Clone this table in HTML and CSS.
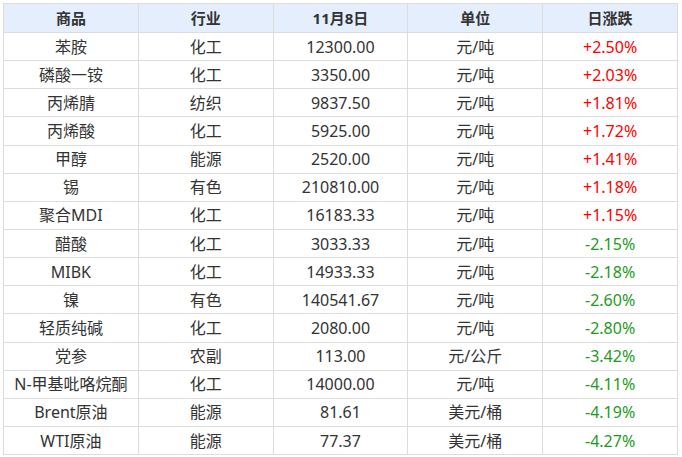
FILE: index.html
```html
<!DOCTYPE html>
<html lang="zh">
<head>
<meta charset="utf-8">
<link rel="stylesheet" href="styles.css">
</head>
<body>
<table class="price-table">
  <thead>
    <tr><th>商品</th><th>行业</th><th>11月8日</th><th>单位</th><th>日涨跌</th></tr>
  </thead>
  <tbody>
    <tr><td>苯胺</td><td>化工</td><td>12300.00</td><td>元/吨</td><td class="up">+2.50%</td></tr>
    <tr><td>磷酸一铵</td><td>化工</td><td>3350.00</td><td>元/吨</td><td class="up">+2.03%</td></tr>
    <tr><td>丙烯腈</td><td>纺织</td><td>9837.50</td><td>元/吨</td><td class="up">+1.81%</td></tr>
    <tr><td>丙烯酸</td><td>化工</td><td>5925.00</td><td>元/吨</td><td class="up">+1.72%</td></tr>
    <tr><td>甲醇</td><td>能源</td><td>2520.00</td><td>元/吨</td><td class="up">+1.41%</td></tr>
    <tr><td>锡</td><td>有色</td><td>210810.00</td><td>元/吨</td><td class="up">+1.18%</td></tr>
    <tr><td>聚合MDI</td><td>化工</td><td>16183.33</td><td>元/吨</td><td class="up">+1.15%</td></tr>
    <tr><td>醋酸</td><td>化工</td><td>3033.33</td><td>元/吨</td><td class="down">-2.15%</td></tr>
    <tr><td>MIBK</td><td>化工</td><td>14933.33</td><td>元/吨</td><td class="down">-2.18%</td></tr>
    <tr><td>镍</td><td>有色</td><td>140541.67</td><td>元/吨</td><td class="down">-2.60%</td></tr>
    <tr><td>轻质纯碱</td><td>化工</td><td>2080.00</td><td>元/吨</td><td class="down">-2.80%</td></tr>
    <tr><td>党参</td><td>农副</td><td>113.00</td><td>元/公斤</td><td class="down">-3.42%</td></tr>
    <tr><td>N-甲基吡咯烷酮</td><td>化工</td><td>14000.00</td><td>元/吨</td><td class="down">-4.11%</td></tr>
    <tr><td>Brent原油</td><td>能源</td><td>81.61</td><td>美元/桶</td><td class="down">-4.19%</td></tr>
    <tr><td>WTI原油</td><td>能源</td><td>77.37</td><td>美元/桶</td><td class="down">-4.27%</td></tr>
  </tbody>
</table>
</body>
</html>
```

FILE: styles.css
```css
html, body {
  margin: 0;
  padding: 0;
  background: #ffffff;
}
body {
  padding: 3px 0 0 3px;
  font-family: "Noto Sans", "Noto Sans CJK SC", sans-serif;
  font-size: 16px;
  color: #333333;
}
.price-table {
  border-collapse: collapse;
  table-layout: fixed;
  width: 675px;
}
.price-table th,
.price-table td {
  border: 1px solid #dcdcdc;
  text-align: center;
  padding: 0;
  line-height: 18px;
}
.price-table th {
  background: #e4eefc;
  font-weight: bold;
  font-size: 15px;
  height: 28px;
  color: #333333;
}
.price-table td {
  height: 27.15px;
}
.price-table .up {
  color: #ff0000;
}
.price-table .down {
  color: #1e9a1e;
}
```
